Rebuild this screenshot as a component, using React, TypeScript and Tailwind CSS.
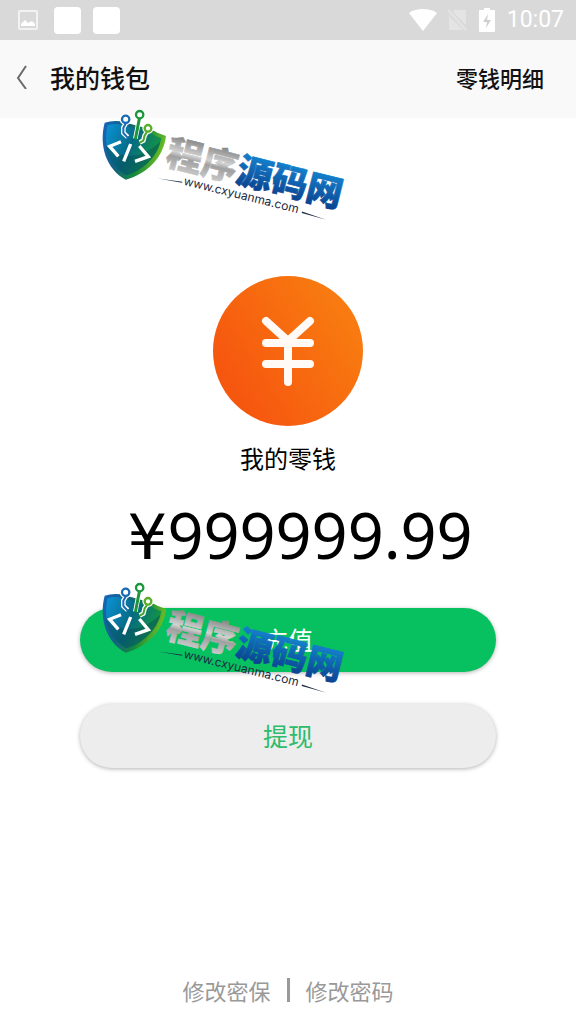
import React from "react";

const StatusBar = () => {
  return (
    <div className="flex h-10 items-center justify-between bg-[#d9d9d9] pl-[18px] pr-3 text-white">
      <div className="flex items-center gap-3">
        <svg className="mr-1 h-5 w-5" viewBox="0 0 20 20" fill="none">
          <rect x="1" y="1" width="18" height="18" rx="1" stroke="#f2f2f2" strokeWidth="2" />
          <path d="M3 16v-2l4-4 3 3 4-2 3 3v2z" fill="#fff" />
        </svg>
        <span className="h-[27px] w-[27px] rounded bg-white" />
        <span className="h-[27px] w-[27px] rounded bg-white" />
      </div>
      <div className="flex items-center">
        <svg className="mr-2.5 h-6 w-7" viewBox="0 0 28 24" fill="currentColor">
          <path d="M14 23 0 5C4 2 9 1 14 1s10 1 14 4z" />
        </svg>
        <svg className="mr-3 h-6 w-5" viewBox="0 0 20 24">
          <path d="M7 2h12v15L6 4zM2 8l14 14H2z" fill="#e4e4e4" />
          <path d="M1 2l18 20" stroke="#e4e4e4" strokeWidth="2" />
        </svg>
        <svg className="mr-3 h-6 w-4" viewBox="0 0 16 24">
          <path d="M5 0h6v2h4q1 0 1 1v20q0 1-1 1H1q-1 0-1-1V3q0-1 1-1h4z" fill="#fff" />
          <path d="M9 6 4 14h4l-1 6 5-8H8z" fill="#cfcfcf" />
        </svg>
        <span className="font-[Roboto,sans-serif] text-[23px] leading-6">10:07</span>
      </div>
    </div>
  );
};

const Header = () => {
  return (
    <header className="flex h-[78px] items-center justify-between bg-[#f9f9f9] pb-1 pl-4 pr-8 text-[#111]">
      <div className="flex items-center gap-[22px]">
        <button type="button" aria-label="返回">
          <svg className="h-6 w-3" viewBox="0 0 12 24" fill="none">
            <path d="M10 1 2 13 10 24" stroke="#6a6a6a" strokeWidth="2" />
          </svg>
        </button>
        <h1 className="text-[25px] leading-9 font-medium">我的钱包</h1>
      </div>
      <a href="#detail" className="text-[22px] leading-8 font-medium">
        零钱明细
      </a>
    </header>
  );
};

const SiteLogo = ({ id, className }: { id: string; className: string }) => {
  return (
    <svg
      className={`pointer-events-none absolute h-[120px] w-[260px] ${className}`}
      viewBox="0 0 780 360"
      fill="none"
    >
      <defs>
        <linearGradient id={`${id}-rim`} x1="20" y1="100" x2="212" y2="160" gradientUnits="userSpaceOnUse">
          <stop offset="0" stopColor="#1764b5" />
          <stop offset="0.35" stopColor="#12617f" />
          <stop offset="0.65" stopColor="#168a3c" />
          <stop offset="1" stopColor="#7cc51f" />
        </linearGradient>
        <linearGradient id={`${id}-face`} x1="35" y1="90" x2="190" y2="160" gradientUnits="userSpaceOnUse">
          <stop offset="0" stopColor="#0b8fd0" />
          <stop offset="0.5" stopColor="#056a83" />
          <stop offset="1" stopColor="#15983f" />
        </linearGradient>
        <linearGradient id={`${id}-silver`} x1="0" y1="-90" x2="0" y2="10" gradientUnits="userSpaceOnUse">
          <stop offset="0" stopColor="#8b8b8b" />
          <stop offset="0.45" stopColor="#d2d2d2" />
          <stop offset="0.6" stopColor="#a0a0a0" />
          <stop offset="1" stopColor="#c8c8c8" />
        </linearGradient>
        <linearGradient id={`${id}-blue`} x1="0" y1="-90" x2="0" y2="10" gradientUnits="userSpaceOnUse">
          <stop offset="0" stopColor="#1480cc" />
          <stop offset="1" stopColor="#0a4390" />
        </linearGradient>
      </defs>

      {/* shield */}
      <path
        d="M29 68Q52 60 78 64L170 89Q190 101 213 108C206 170 158 222 92 239C34 207 11 137 29 68z"
        fill={`url(#${id}-rim)`}
      />
      <path
        d="M38 76Q60 69 80 74L168 100Q184 111 199 115C190 165 149 209 94 226C45 195 23 136 38 76z"
        fill={`url(#${id}-face)`}
      />
      <path d="M32 137Q110 205 196 125C186 169 147 210 94 226C61 205 40 173 32 137z" fill="#064a55" opacity="0.45" />

      {/* circuit pins */}
      <g strokeLinejoin="round">
        <path d="M92 71l-7 12v16l13 12M133 56l-12 60M156 96l-7 10-4 16-11 5" stroke="#fff" strokeWidth="14" />
        <g fill="#fff" stroke="#fff" strokeWidth="8">
          <circle cx="92" cy="58" r="14" />
          <circle cx="134" cy="44" r="14" />
          <circle cx="159" cy="85" r="13" />
        </g>
        <path d="M92 71l-7 12v16l13 14" stroke="#176bb5" strokeWidth="6" />
        <path d="M133 56l-12 62" stroke="#1b963b" strokeWidth="9" />
        <path d="M156 96l-7 10-4 16-11 6" stroke="#46a52b" strokeWidth="6" />
        <circle cx="92" cy="58" r="11" stroke="#176bb5" strokeWidth="7" />
        <circle cx="134" cy="44" r="11" stroke="#1b963b" strokeWidth="7" />
        <circle cx="159" cy="85" r="10" stroke="#59ae29" strokeWidth="7" />
      </g>

      {/* code mark */}
      <path d="M78 125 44 139 70 169M107 132 86 184M133 138 160 170 120 184" stroke="#fff" strokeWidth="10" />

      {/* wordmark */}
      <g
        transform="translate(208 193) rotate(14)"
        className="font-['Noto_Sans_CJK_SC',sans-serif] text-[108px] font-black"
        strokeWidth="2"
      >
        <text fill={`url(#${id}-silver)`} stroke={`url(#${id}-silver)`}>
          程序
        </text>
        <text x="216" fill={`url(#${id}-blue)`} stroke={`url(#${id}-blue)`}>
          源码网
        </text>
      </g>
      <g transform="translate(264 254) rotate(14)">
        <text className="font-[Inter,sans-serif] text-[36px]" fill="#1c2b45">
          www.cxyuanma.com
        </text>
        <path d="M-78 0-4-8v3zM366-8l76 6-76-2z" fill="#1c2b45" />
      </g>
    </svg>
  );
};

const App = () => {
  return (
    <div className="relative flex min-h-screen flex-col bg-white font-['Noto_Sans_CJK_SC',sans-serif]">
      <StatusBar />
      <Header />

      <main className="flex flex-1 flex-col items-center px-20 pt-[158px]">
        <svg className="h-[150px] w-[150px]" viewBox="0 0 150 150" fill="none">
          <defs>
            <linearGradient id="coin" x1="20" y1="110" x2="130" y2="40" gradientUnits="userSpaceOnUse">
              <stop stopColor="#f6570f" />
              <stop offset="1" stopColor="#f87a10" />
            </linearGradient>
          </defs>
          <circle cx="75" cy="75" r="75" fill="url(#coin)" />
          <path
            d="M53 45 75 65 97 45M53 67h44M53 88h44M75 65v41"
            stroke="#fffaf5"
            strokeWidth="8"
            strokeLinecap="round"
            strokeLinejoin="round"
          />
        </svg>

        <p className="mt-3.5 text-2xl leading-9 text-black">我的零钱</p>
        <p className="mt-3.5 pl-6 font-['Noto_Sans',sans-serif] text-[63px] leading-[90px] whitespace-nowrap text-black">
          <span className="font-['DejaVu_Sans',sans-serif]">¥</span>999999.99
        </p>

        <button
          type="button"
          className="mt-[25px] h-16 w-full rounded-full bg-[#07c160] text-[25px] text-white shadow-[0_1px_4px_rgba(0,0,0,0.3)]"
        >
          充值
        </button>
        <button
          type="button"
          className="mt-8 h-16 w-full rounded-full bg-[#ededed] text-[25px] text-[#2dbb6c] shadow-[0_1px_4px_rgba(0,0,0,0.3)]"
        >
          提现
        </button>
      </main>

      <footer className="flex items-center justify-center gap-4 pb-[18px] text-[22px] leading-8 text-[#999]">
        <a href="#security">修改密保</a>
        <span className="h-6 w-[3px] bg-[#999]" />
        <a href="#password">修改密码</a>
      </footer>

      <SiteLogo id="logo-top" className="top-[100px] left-[95px]" />
      <SiteLogo id="logo-bottom" className="top-[573px] left-[95px]" />
    </div>
  );
};

export default App;
